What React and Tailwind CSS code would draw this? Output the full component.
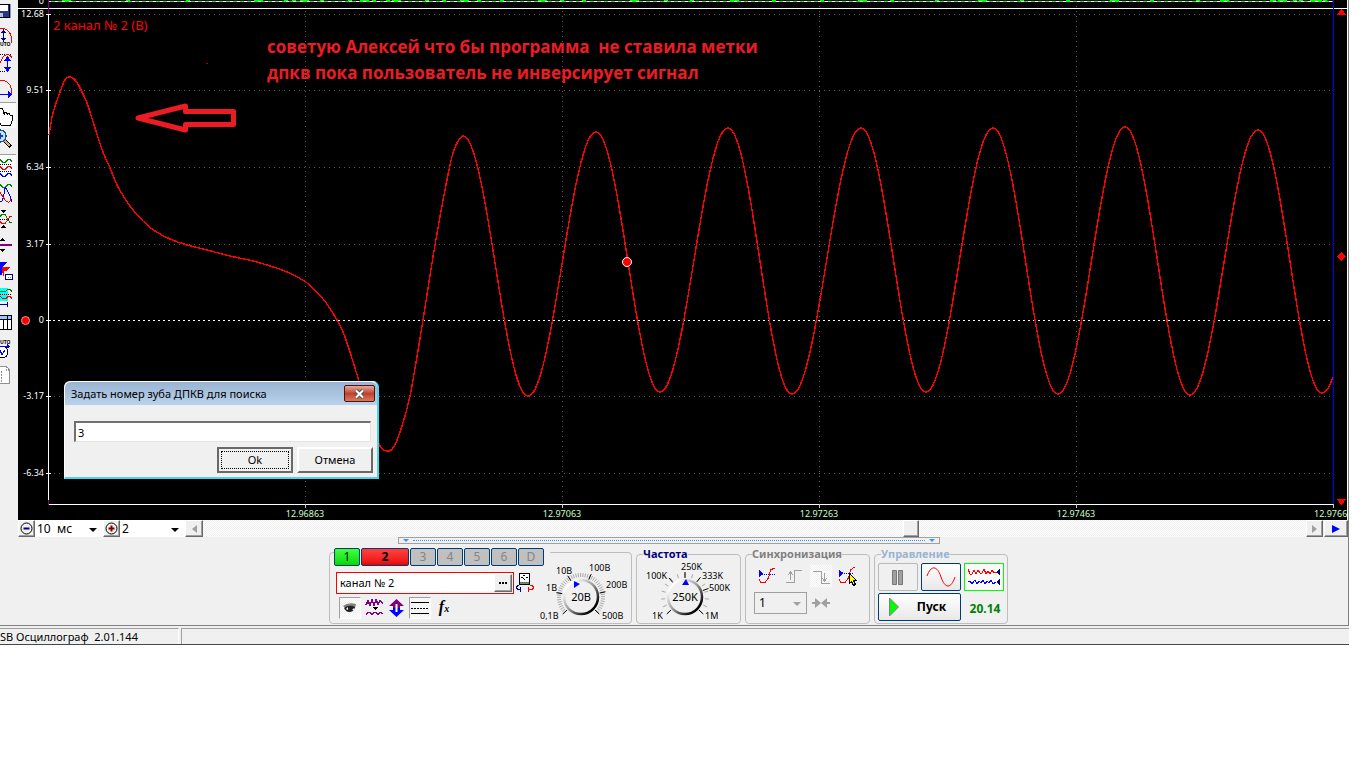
import React, { useState } from "react";

const clamp = (v, lo, hi) => Math.min(hi, Math.max(lo, v));

// first part of the trace: the missing teeth of the crank wheel
const lead = [
  [49, 135], [53, 113], [60, 92], [65, 80], [70, 77], [76, 81], [81, 90], [87, 103],
  [95, 128], [103, 152], [110, 168], [118, 187], [130, 206], [143, 221], [155, 231],
  [170, 239], [187, 245], [207, 250], [230, 256], [253, 261], [270, 266], [287, 272],
  [307, 283], [323, 299], [337, 320], [345, 337], [358, 378], [370, 420], [380, 446],
  [387, 451], [393, 448], [400, 432], [410, 396], [423, 320], [435, 245], [450, 165],
  [457, 143], [463, 136],
];

// then regular teeth, peaks and troughs in turn
const turns = [
  [463, 136], [528, 396], [596, 132], [660, 392], [728, 128], [792, 394], [861, 128],
  [926, 392], [993, 128], [1058, 394], [1125, 127], [1190, 395], [1258, 130],
  [1322, 393], [1391, 130],
];

const buildTrace = () => {
  let d = `M${lead[0][0]} ${lead[0][1]}`;
  for (let i = 0; i < lead.length - 1; i++) {
    const a = lead[clamp(i - 1, 0, lead.length - 1)];
    const b = lead[i];
    const c = lead[i + 1];
    const e = lead[clamp(i + 2, 0, lead.length - 1)];
    d += `C${b[0] + (c[0] - a[0]) / 6} ${b[1] + (c[1] - a[1]) / 6} ${
      c[0] - (e[0] - b[0]) / 6
    } ${c[1] - (e[1] - b[1]) / 6} ${c[0]} ${c[1]}`;
  }
  for (let i = 0; i < turns.length - 1; i++) {
    const [x0, y0] = turns[i];
    const [x1, y1] = turns[i + 1];
    for (let x = x0 + 1; x <= x1 && x <= 1333; x++) {
      const t = (1 - Math.cos((Math.PI * (x - x0)) / (x1 - x0))) / 2;
      d += `L${x} ${(y0 + (y1 - y0) * t).toFixed(1)}`;
    }
  }
  return d;
};

const trace = buildTrace();

const yTicks = [
  ["12.68", 14], ["9.51", 90], ["6.34", 167], ["3.17", 244], ["0", 320], ["-3.17", 396], ["-6.34", 473],
];
const xTicks = [
  ["12.96863", 305], ["12.97063", 562], ["12.97263", 819], ["12.97463", 1076],
];
const noise = [32, 96, 156, 224, 254, 262, 270, 290, 318, 330, 342, 356, 362, 395, 412, 430, 447, 470, 508, 530, 552, 600, 634, 660, 700, 742, 790, 828, 860, 905, 948, 990, 1036, 1080, 1120, 1166, 1190, 1240, 1242, 1248, 1263, 1269, 1280, 1288, 1293];

const Chart = () => (
  <svg viewBox="18 0 1329 520" className="block w-full h-auto bg-black" shapeRendering="crispEdges">
    <g stroke="#5c5c5c" strokeDasharray="1 4">
      {yTicks.map(([t, y]) => t !== "0" && <line key={t} x1="54" x2="1333" y1={y + 0.5} y2={y + 0.5} />)}
      {xTicks.map(([t, x]) => <line key={t} x1={x + 0.5} x2={x + 0.5} y1="6" y2="504" />)}
    </g>
    <path d="M48 320.5H1333" stroke="#fff" strokeDasharray="2 3" />
    <path d="M48 1.5H1333" stroke="#0f0" />
    <path d="M48 1.5H1333" stroke="#fff" strokeDasharray="3 4" />
    {noise.map((x, i) => <rect key={x} x={x + 30} y="0" width={i % 3 ? 4 : 9} height="1" fill="#0f0" />)}
    <path d="M18 8.5H1347M48.5 8V505M48 504.5H1334" stroke="#fff" fill="none" />
    <path d="M48.5 0V14M48.5 500V505" stroke="#800080" />
    <path d="M1333.5 0V504" stroke="#00f" />
    {yTicks.map(([t, y]) => (
      <g key={t}>
        <path d={`M46 ${y + 0.5}H51`} stroke="#fff" />
        <text x="44" y={y + 3} textAnchor="end" fill="#fff" fontSize="9">{t}</text>
      </g>
    ))}
    <text x="44" y="4" textAnchor="end" fill="#fff" fontSize="9">0</text>
    {xTicks.map(([t, x]) => (
      <g key={t}>
        <path d={`M${x + 0.5} 504V508`} stroke="#ccc" />
        <text x={x} y="517" textAnchor="middle" fill="#c8ffc8" fontSize="9">{t}</text>
      </g>
    ))}
    <path d="M1333.5 504V508" stroke="#ccc" />
    <text x="1314" y="517" fill="#c8ffc8" fontSize="9">12.9766</text>
    <path d={trace} stroke="#f00" strokeWidth="1.400" fill="none" />
    <g fill="#f00">
      <path d="M1337 15L1341 9H1342L1346 15ZM1337 499H1346L1342 505H1341ZM1341.500 252L1346 256.500L1341.500 261L1337 256.500Z" />
      <rect x="206" y="63" width="2" height="1" opacity="0.7" />
    </g>
    <g shapeRendering="auto">
      <circle cx="25.500" cy="320.500" r="4" fill="#f00" stroke="#ff9090" />
      <circle cx="627" cy="262" r="4.500" fill="#f00" stroke="#fff" />
      <path
        d="M138 118L185.500 106V111.500H233.500V124.500H185.500V130Z"
        fill="none"
        stroke="#ed1c24"
        strokeWidth="5"
        strokeLinejoin="round"
      />
    </g>
  </svg>
);

const tools = [
  {
    name: "Сохранить",
    box: "h-6",
    art: (
      <>
        <path d="M0 4H10V18H0Z" fill="#000" />
        <path d="M0 5H9V17H0Z" fill="#27348b" />
        <path d="M0 5H8V11H0Z" fill="#fff" />
        <path d="M0 13H3V17H0Z" fill="#b9c0d8" />
        <path d="M10.500 4V18" stroke="#8a95c8" />
      </>
    ),
  },
  {
    name: "Авто амплитуда",
    art: (
      <>
        <path d="M0 4.500H4Q12 7 12 19" stroke="#f00" fill="none" />
        <path d="M3.500 6V17" stroke="#000080" />
        <path d="M1 9L3.500 5L6 9ZM1 14H6L3.500 18Z" fill="#000080" />
        <text x="0" y="22" fontSize="5" fontWeight="bold" fill="#000">UTO</text>
      </>
    ),
  },
  {
    name: "Масштаб по вертикали",
    art: (
      <>
        <path d="M0 4.500H12M0 21.500H6" stroke="#000" strokeDasharray="1 1" />
        <path d="M0 13Q3 5 7 4.500Q11 5 12 8" stroke="#f00" fill="none" />
        <path d="M7.500 8V20" stroke="#00f" />
        <path d="M4 11L7.500 6L11 11ZM4 17H11L7.500 22Z" fill="#00f" />
      </>
    ),
  },
  {
    name: "Масштаб по горизонтали",
    art: (
      <>
        <path d="M0 4.500H4Q12 7 12 18" stroke="#f00" fill="none" />
        <path d="M0 18.500H9" stroke="#00f" />
        <path d="M8 15L12 18.500L8 22Z" fill="#00f" />
      </>
    ),
  },
  {
    name: "Рука",
    box: "h-[26px] border-t border-t-[#a0a0a0]",
    face: "bg-[#fafafa]",
    art: (
      <path
        d="M-1 5.500H2.500L4.500 12V9.500H6.500L7.500 12V10.500H9.500L10.500 13V12.500H12.500V17L10.500 22.500H1.500L-1 19"
        stroke="#000"
        fill="#fff"
      />
    ),
  },
  {
    name: "Лупа",
    art: (
      <>
        <path d="M4 12L11 19" stroke="#000" strokeWidth="4" />
        <path d="M5 13L10 18" stroke="#d8b060" strokeWidth="2" />
        <circle cx="0" cy="8" r="6" fill="#bfe0ff" stroke="#1d4f91" strokeWidth="1.500" />
        <path d="M0 8H3M0 5V11" stroke="#1040a0" strokeWidth="2" />
      </>
    ),
  },
  {
    name: "Раздельные каналы",
    box: "h-[26px] border-t border-t-[#a0a0a0]",
    face: "bg-[#fafafa]",
    art: (
      <>
        <path d="M0 4.500L3 7.500H5L8 4.500H10L12 6.500" stroke="#008000" fill="none" />
        <path d="M0 11.500L3 14.500H5L8 11.500H10L12 13.500" stroke="#f00" fill="none" />
        <path d="M0 18.500L3 21.500H5L8 18.500H10L12 20.500" stroke="#00f" fill="none" />
        <path d="M0 9.500H12M0 16.500H12" stroke="#000" strokeDasharray="1 1" />
      </>
    ),
  },
  {
    name: "Совместные каналы",
    art: (
      <>
        <path d="M0 4.500L3 7.500H5L8 4.500H10L12 6.500" stroke="#008000" fill="none" />
        <path d="M0 22Q3 22 4 14T6 8T9 14T12 22" stroke="#00f" fill="none" />
        <path d="M0 12Q3 18 6 21T11 19" stroke="#f00" fill="none" />
      </>
    ),
  },
  {
    name: "Наложение",
    art: (
      <>
        <path d="M1 4H6L3.500 7ZM1 22H6L3.500 19Z" fill="#000" />
        <path d="M0 10.500L2 8.500H5L10 16.500H12" stroke="#008000" fill="none" />
        <path d="M0 15.500L2 17.500H5L10 10.500H12" stroke="#f00" fill="none" />
        <path d="M0 13.500H10" stroke="#000" strokeDasharray="1 1" />
      </>
    ),
  },
  {
    name: "Сдвиг уровня",
    art: (
      <>
        <path d="M0 9H5L2.500 6ZM0 17H5L2.500 20Z" fill="#000" />
        <path d="M0 13H12" stroke="#800080" strokeWidth="2" />
      </>
    ),
  },
  {
    name: "Метки",
    art: (
      <>
        <path d="M0 4H7L2 10V17H0Z" fill="#00f" />
        <path d="M2 9H10L6 13H4V19L2 14Z" fill="#f00" />
        <path d="M5.500 16.500H12.500V21.500H5.500Z" fill="#fff" stroke="#000080" />
        <path d="M8 19H11" stroke="#888" strokeDasharray="1 1" />
      </>
    ),
  },
  {
    name: "Измерение",
    art: (
      <>
        <path d="M0 4H8V17H0Z" fill="#0ff" />
        <path d="M0 7.500H5L8 5.500H10L12 7.500" stroke="#008000" fill="none" />
        <path d="M0 12.500L3 14.500H6L8 12.500H10L12 14.500" stroke="#f00" fill="none" />
        <path d="M0 10.500H12" stroke="#000" strokeDasharray="1 1" />
        <path d="M0 20.500H7M7.500 18V23" stroke="#000080" />
      </>
    ),
  },
  {
    name: "Таблица",
    art: (
      <>
        <path d="M0 5.500H11.500V19.500H0" fill="#fff" stroke="#000" />
        <path d="M0 6H11V9H0Z" fill="#9cc8ff" />
        <path d="M0 9.500H11M3.500 9V19M7.500 6V19" stroke="#000" />
      </>
    ),
  },
  {
    name: "Авто измерение",
    art: (
      <>
        <text x="0" y="8" fontSize="5" fontWeight="bold" fill="#000">UTO</text>
        <circle cx="2" cy="16" r="6" fill="#fff" stroke="#000" />
        <path d="M0 14L2 19L5 14M0 10.500H8" stroke="#00f" fill="none" />
        <path d="M7 8L11 11L7 12Z" fill="#00f" />
      </>
    ),
  },
  {
    name: "Отчет",
    art: (
      <>
        <path d="M0 4.500H6.500L9.500 8V21.500H0" fill="#fff" stroke="#909090" />
        <path d="M6.500 4V8.500H9.500M1 9V20" stroke="#909090" fill="none" strokeDasharray="2 1" />
      </>
    ),
  },
];

const Toolbar = () => (
  <div className="w-[18px] shrink-0 pr-0.5">
    {tools.map((t) => (
      <button key={t.name} aria-label={t.name} className={`block w-full overflow-hidden ${t.box || "h-[26px]"} ${t.face || ""}`}>
        <svg viewBox="0 0 16 26" width="16" height="26" shapeRendering="crispEdges">{t.art}</svg>
      </button>
    ))}
  </div>
);

const Dialog = () => {
  const [tooth, setTooth] = useState("3");
  return (
    <div
      role="dialog"
      aria-labelledby="dlg-title"
      className="absolute left-[46px] top-[381px] w-[315px] rounded-t-md bg-[#f0f0f0] border-t border-l border-white border-r-2 border-b-2 border-r-[#4fd0ee] border-b-[#4fd0ee] pb-1"
    >
      <div className="flex h-[23px] items-center justify-between rounded-t-md bg-linear-to-b from-[#99b4d1] to-[#bad2ec] pl-1.5 pr-0.5">
        <span id="dlg-title" className="text-black">Задать номер зуба ДПКВ для поиска</span>
        <button
          aria-label="Закрыть"
          className="flex h-[17px] w-[31px] items-center justify-center rounded-xs border border-[#4c1410] bg-linear-to-b from-[#e6a79c] via-[#c0402c] to-[#d67a5c]"
        >
          <svg width="13" height="10" viewBox="0 0 13 10">
            <path d="M3 1.500L10 8.500M10 1.500L3 8.500" stroke="#555" strokeWidth="4" />
            <path d="M3 1.500L10 8.500M10 1.500L3 8.500" stroke="#fff" strokeWidth="2" />
          </svg>
        </button>
      </div>
      <div className="pt-4 pr-1 pl-[9px]">
        <div className="pr-0.5">
          <input
            aria-label="Номер зуба"
            value={tooth}
            onChange={(e) => setTooth(e.target.value)}
            className="block h-[21px] w-full border-t-2 border-l-2 border-r border-b border-t-[#707070] border-l-[#707070] border-r-[#e3e3e3] border-b-[#e3e3e3] bg-white px-0.5 outline-none"
          />
        </div>
        <div className="mt-[5px] flex justify-end gap-1">
          <button className="h-[26px] w-[76px] border-2 border-[#696969] bg-[#f0f0f0] p-0.5">
            <span className="flex h-full items-center justify-center border border-dotted border-black">Ok</span>
          </button>
          <button className="h-[26px] w-[76px] border-2 border-t-white border-l-white border-r-[#696969] border-b-[#696969] bg-[#f0f0f0]">
            Отмена
          </button>
        </div>
      </div>
    </div>
  );
};

const Arrow = ({ className }) => (
  <svg className={className} width="8" height="4" viewBox="0 0 8 4" fill="currentColor">
    <path d="M0 0H8L4 4Z" />
  </svg>
);

const Pick = ({ label, options, width, disabled, frame = "" }) => (
  <div className={`relative ${width}`}>
    <select
      aria-label={label}
      disabled={disabled}
      className={`block h-full w-full appearance-none text-black outline-none ${frame}`}
    >
      {options.map((o) => (
        <option key={o}>{o}</option>
      ))}
    </select>
    <Arrow className={`pointer-events-none absolute right-1.5 top-1/2 -mt-px ${disabled ? "text-[#a0a0a0]" : "text-black"}`} />
  </div>
);

const raised = "border border-t-white border-l-white border-r-[#696969] border-b-[#696969] bg-[#f0f0f0] shadow-[inset_-1px_-1px_0_#a0a0a0]";
const check = "bg-[repeating-conic-gradient(#f0f0f0_0_25%,#ffffff_0_50%)] bg-size-[2px_2px]";

const ScrollRow = () => (
  <div className="ml-[18px] flex h-[17px]">
    {["−", "+"].map((sign, i) => (
      <React.Fragment key={sign}>
        <button aria-label={i ? "Увеличить" : "Уменьшить"} className={`flex w-[17px] items-center justify-center ${raised}`}>
          <svg width="13" height="13" viewBox="0 0 13 13">
            <circle cx="6.500" cy="6.500" r="5.500" fill="none" stroke="#000" />
            <path d="M3.500 6.500H9.500" stroke={i ? "#800000" : "#000080"} strokeWidth="2" />
            {i === 1 && <path d="M6.500 3.500V9.500" stroke="#800000" strokeWidth="2" />}
          </svg>
        </button>
        {i === 0 ? (
          <Pick label="Развертка" options={["10\u00a0 мс"]} width="w-[68px]" frame="bg-white text-xs pl-0.5" />
        ) : (
          <Pick label="Усиление" options={["2"]} width="w-[65px]" frame="bg-white text-xs pl-0.5" />
        )}
      </React.Fragment>
    ))}
    <button aria-label="Влево" className={`flex w-[18px] items-center justify-center ${raised}`}>
      <svg width="5" height="8" viewBox="0 0 5 8"><path d="M5 0V8L0 4Z" fill="#a0a0a0" /></svg>
    </button>
    <div className={`flex flex-1 ${check}`}>
      <div className="w-[63.500%]" />
      <div className={`w-4 ${raised}`} />
    </div>
    <button aria-label="Вправо" className={`flex w-[17px] items-center justify-center ${raised}`}>
      <svg width="5" height="8" viewBox="0 0 5 8"><path d="M0 0V8L5 4Z" fill="#a0a0a0" /></svg>
    </button>
    <button aria-label="Воспроизвести" className={`ml-px flex w-6 items-center justify-center ${raised}`}>
      <svg width="8" height="8" viewBox="0 0 8 8"><path d="M0 0V8L8 4Z" fill="#00f" /></svg>
    </button>
  </div>
);

const Knob = ({ id, value, majors, step, labels, pointer, width }) => {
  const ray = (deg, r0, r1) => {
    const a = (deg * Math.PI) / 180;
    return `M${45 + r0 * Math.sin(a)} ${38 - r0 * Math.cos(a)}L${45 + r1 * Math.sin(a)} ${38 - r1 * Math.cos(a)}`;
  };
  const minors = [];
  for (let a = -133; a <= 133; a += step) minors.push(a);
  return (
    <svg width={width} height="64" viewBox={`0 0 ${width} 64`} role="img" aria-label={value}>
      <defs>
        <linearGradient id={id} x1="0" y1="0" x2="1" y2="1">
          <stop offset="0.15" stopColor="#fff" />
          <stop offset="0.5" stopColor="#999" />
          <stop offset="0.85" stopColor="#000" />
        </linearGradient>
      </defs>
      {minors.map((a) => <path key={a} d={ray(a, 20, 24)} stroke="#a8a8a8" />)}
      {majors.map((a) => <path key={a} d={ray(a, 19, 25)} stroke="#000" />)}
      <circle cx="45" cy="38" r="17" fill="#f0f0f0" stroke={`url(#${id})`} strokeWidth="2.500" />
      <path d={pointer} fill="#00f" />
      <text x="45" y="42" textAnchor="middle" fontSize="11">{value}</text>
      {labels.map(([t, x, y]) => <text key={t} x={x} y={y} fontSize="9">{t}</text>)}
    </svg>
  );
};

const channels = [
  ["1", "w-[26px] bg-linear-to-b from-[#3dff3d] to-[#00d800] text-black"],
  ["2", "w-12 bg-linear-to-b from-[#ff4040] to-[#e80000] font-bold text-black"],
  ["3", "w-[26px] bg-[#c0c0c0] text-[#858585]"],
  ["4", "w-[26px] bg-[#c0c0c0] text-[#858585]"],
  ["5", "w-[26px] bg-[#c0c0c0] text-[#858585]"],
  ["6", "w-[26px] bg-[#c0c0c0] text-[#858585]"],
  ["D", "w-[26px] bg-[#c0c0c0] text-[#858585]"],
];

const pressed = `border border-t-[#a0a0a0] border-l-[#a0a0a0] border-r-white border-b-white ${check}`;

const ChannelGroup = () => {
  const [name, setName] = useState("канал № 2");
  return (
    <div className="mt-[5px] flex w-[303px] rounded-sm border border-[#bdbdbd]">
      <div className="-mt-[5px] pl-1">
        <div className="flex gap-px bg-[#f0f0f0] pr-1.5">
          {channels.map(([n, look]) => (
            <button key={n} className={`h-[18px] rounded-xs border border-[#003c74] text-xs leading-4 ${look}`}>
              {n}
            </button>
          ))}
        </div>
        <div className="mt-1.5 ml-0.5 flex items-center">
          <div className="flex h-[22px] w-[178px] border border-[#f00] bg-white p-px">
            <input
              aria-label="Имя канала"
              value={name}
              onChange={(e) => setName(e.target.value)}
              className="min-w-0 flex-1 pl-0.5 outline-none"
            />
            <button aria-label="Настройки" className={`flex w-[18px] items-center justify-center ${raised}`}>
              <svg width="9" height="2"><path d="M0 1H2M3 1H5M6 1H8" stroke="#000" strokeWidth="2" /></svg>
            </button>
          </div>
          <button aria-label="Датчик" className="ml-0.5">
            <svg width="18" height="20" viewBox="0 0 18 20" shapeRendering="crispEdges">
              <path d="M3.500 0.500H13.500V11.500H3.500Z" fill="#fff" stroke="#000" />
              <path d="M4 9H13V11H4Z" fill="#808080" />
              <path d="M4 9.500H13" stroke="#0a0" strokeDasharray="1 1" />
              <path d="M5 4.500H6M7 2.500H9M10 4.500H12M8.500 7L6.500 4" stroke="#000" fill="none" />
              <path d="M3 12.500H1.500L0.500 14.500L1.500 16.500H5M4.500 14V19" stroke="#000080" fill="none" />
              <path d="M14 12.500H16.500L17.500 14.500L16.500 16.500H12M12.500 14V19" stroke="#f00" fill="none" />
            </svg>
          </button>
        </div>
        <div className="mt-[3px] ml-[5px] flex items-center gap-1">
          <button aria-label="Показать" className={`flex size-[22px] items-center justify-center ${pressed}`}>
            <svg width="14" height="10" viewBox="0 0 14 10">
              <path d="M0 3Q5 -1 13 1L12 5L2 5Z" fill="#808080" />
              <path d="M1 5Q6 1 12 4Q11 9 6 9Q3 9 1 5Z" fill="#222" />
              <path d="M3 6L5 4V7ZM9 7L11 5V7Z" fill="#fff" />
            </svg>
          </button>
          <button aria-label="Фильтр">
            <svg width="20" height="18" viewBox="0 0 20 18" shapeRendering="crispEdges">
              <path d="M1 6L3 2L5 6L7 1L9 6L11 1L13 5L15 2L18 4" stroke="#800080" strokeWidth="1.500" fill="none" />
              <path d="M1 16L3 13H5L7 16L9 13H11L13 16L15 13L18 15" stroke="#800080" fill="none" />
              <path d="M7 8H13L10 11Z" fill="#000" />
            </svg>
          </button>
          <button aria-label="Инверсия">
            <svg width="16" height="18" viewBox="0 0 16 18">
              <path d="M7.500 0L15 7H11V9H4V7H0Z" fill="#800080" />
              <path d="M7.500 18L15 11H11V9H4V11H0Z" fill="#00f" />
              <path d="M7.500 5V13" stroke="#fff" strokeWidth="2" />
            </svg>
          </button>
          <button aria-label="Линии" className={`flex size-[22px] items-center justify-center ${pressed}`}>
            <svg width="18" height="14" viewBox="0 0 18 14" shapeRendering="crispEdges">
              <path d="M0 1.500H18M0 12.500H18" stroke="#000" />
              <path d="M0 7.500H18" stroke="#000" strokeDasharray="2 1" />
            </svg>
          </button>
          <button className="w-[18px] font-['Liberation_Serif',serif] text-base leading-4 font-bold italic">
            f<span className="text-[10px]">x</span>
          </button>
        </div>
      </div>
      <div className="-ml-3.5 pt-1.5">
        <Knob
          id="k1"
          value="20В"
          width="94"
          step={6}
          majors={[-133, -80, -32, 24, 78, 133]}
          pointer="M38 22V29L44 25Z"
          labels={[["10В", 20, 15], ["100В", 53, 12], ["1В", 10, 32], ["200В", 70, 29], ["0,1В", 4, 60], ["500В", 66, 60]]}
        />
      </div>
    </div>
  );
};

const Group = ({ title, tone, width, children }) => (
  <fieldset className={`h-[77px] rounded-sm border border-[#bdbdbd] ${width}`}>
    <legend className={`ml-1.5 text-[11px] leading-[14px] font-bold ${tone}`}>{title}</legend>
    {children}
  </fieldset>
);

const SyncGroup = () => (
  <Group title="Синхронизация" tone="text-[#808080]" width="w-[125px]">
    <div className="flex gap-[5px] pt-1 pl-2.5">
      <button aria-label="Синхронизация по уровню" className="size-[22px]">
        <svg width="22" height="22" viewBox="0 0 22 22" shapeRendering="crispEdges">
          <path d="M3 5V12L8 9Z" fill="#00f" />
          <path d="M8 9.500H19" stroke="#00f" strokeDasharray="1 1" />
          <path d="M3.500 14L4.500 17.500H9L12.500 13L14.500 5L18.500 3" stroke="#f00" fill="none" />
        </svg>
      </button>
      <button aria-label="По фронту" className="size-[22px]" disabled>
        <svg width="22" height="22" viewBox="0 0 22 22" fill="none" stroke="#a0a0a0" shapeRendering="crispEdges">
          <path d="M3 17.500H11.500V5.500H19M7.500 15V7M5 10L7.500 7L10 10" />
        </svg>
      </button>
      <button aria-label="По спаду" className={`size-[22px] ${check}`} disabled>
        <svg width="22" height="22" viewBox="0 0 22 22" fill="none" stroke="#a0a0a0" shapeRendering="crispEdges">
          <path d="M3 6.500H11.500V18.500H20M14.500 8V16M12 13L14.500 16L17 13" />
        </svg>
      </button>
      <button aria-label="Выбор уровня" className="size-[22px]">
        <svg width="22" height="22" viewBox="0 0 22 22" shapeRendering="crispEdges">
          <path d="M2 5V12L7 8Z" fill="#00f" />
          <path d="M7 8.500H17" stroke="#00f" strokeDasharray="1 1" />
          <path d="M2.500 14L3.500 17.500H8L11.500 13L13.500 5L17.500 2" stroke="#f00" fill="none" />
          <path d="M12.500 8.500L19.500 15.500H16.500L18.500 19.500L16.500 20.500L14.500 16.500L12.500 18.500Z" fill="#ff0" stroke="#000" />
        </svg>
      </button>
    </div>
    <div className="mt-[5px] flex items-center gap-[5px] pl-2">
      <Pick label="Канал синхронизации" options={["1"]} width="w-[53px] h-[22px]" disabled frame="border border-[#a0a0a0] pl-1 text-xs" />
      <svg width="18" height="10" viewBox="0 0 18 10" fill="#a0a0a0">
        <path d="M0 4H3V0L9 5L3 10V6H0ZM18 4H15V0L9 5L15 10V6H18Z" />
      </svg>
    </div>
  </Group>
);

const ControlGroup = () => (
  <Group title="Управление" tone="text-[#99b4d1]" width="w-[134px]">
    <div className="flex gap-[3px] px-[3px] pt-0.5">
      <button aria-label="Пауза" className="flex h-7 w-10 items-center justify-center rounded-xs border border-[#b8b8b8]">
        <svg width="12" height="15" viewBox="0 0 12 15" fill="#a0a0a0" stroke="#777">
          <path d="M0.500 0.500H4.500V14.500H0.500ZM6.500 0.500H10.500V14.500H6.500Z" />
        </svg>
      </button>
      <button aria-label="Сигнал" className="flex h-7 w-10 items-center justify-center rounded-xs border border-[#003c74] bg-linear-to-b from-white to-[#e8e8e8]">
        <svg width="30" height="20" viewBox="0 0 30 20">
          <path d="M1 9C5 -2 11 -2 15 10S25 22 29 10" stroke="#f00" fill="none" />
        </svg>
      </button>
      <button aria-label="Два сигнала" className="flex h-7 w-10 items-center justify-center border border-[#0f0] bg-[#fafafa]">
        <svg width="32" height="18" viewBox="0 0 32 18" shapeRendering="crispEdges">
          <path d="M0 1L2 6H4L6 2L8 6L10 2L12 5H14L16 1L18 6L20 3L22 6L24 2L26 5L29 4" stroke="#f00" fill="none" />
          <path d="M0 14L2 13L4 16L7 12L9 16L11 13L13 15L15 12L17 16L19 13L21 15L23 12L25 16L28 14" stroke="#00f" fill="none" />
          <path d="M32 1V7L28 4ZM32 11V17L28 14Z" fill="#000080" />
        </svg>
      </button>
    </div>
    <div className="mt-0.5 flex items-center gap-[3px] pr-px pl-[3px]">
      <button className="flex h-7 w-[83px] items-center rounded-xs border border-[#003c74] bg-linear-to-b from-white to-[#e8e8e8] pl-2.5 text-xs font-bold">
        <svg width="10" height="20" viewBox="0 0 10 20"><path d="M0.500 1V19L9.500 10Z" fill="#0f0" stroke="#808080" /></svg>
        <span className="flex-1 pl-1 text-center">Пуск</span>
      </button>
      <span className="flex-1 pt-1 text-center text-xs font-bold text-[#008000]">20.14</span>
    </div>
  </Group>
);

export default function App() {
  return (
    <div className="min-h-screen bg-white font-['Noto_Sans',sans-serif] text-[11px] leading-4 text-black">
      <div className="mr-[11px] bg-[#f0f0f0]">
        <div className="border-r border-[#808080]">
          <div className="flex border-r border-white">
            <Toolbar />
            <div className="relative flex-1 bg-black">
              <Chart />
              <p className="absolute top-[17px] left-[35px] text-[13px] text-[#f00]">2 канал № 2 (В)</p>
              <p className="absolute top-[34px] left-[249px] text-[17px] leading-[26px] font-bold whitespace-pre text-[#ed1c24] font-['Open_Sans',sans-serif]">
                {"советую Алексей что бы программа  не ставила метки\nдпкв пока пользователь не инверсирует сигнал"}
              </p>
              <Dialog />
            </div>
          </div>
          <ScrollRow />
          <div className="flex h-[88px] flex-col items-center gap-[3px] pr-[11px]">
            <div className="flex h-[7px] w-[542px] items-center gap-1 border border-[#a0a0a0] px-1">
              <Arrow className="h-[3px] w-[6px] text-[#3399ff]" />
              <div className="flex-1 border-t border-dotted border-[#3399ff]" />
              <Arrow className="h-[3px] w-[6px] text-[#3399ff]" />
            </div>
            <div className="flex h-[77px] gap-1">
              <ChannelGroup />
              <Group title="Частота" tone="text-[#000080]" width="w-[105px]">
                <div className="-mt-0.5 pl-[3px]">
                  <Knob
                    id="k2"
                    value="250K"
                    width="98"
                    step={19}
                    majors={[-133, -40, 0, 38, 70, 133]}
                    pointer="M42 26H49L46 20Z"
                    labels={[["250K", 41, 11], ["100K", 6, 20], ["333K", 62, 20], ["500K", 69, 32], ["1K", 12, 60], ["1M", 65, 60]]}
                  />
                </div>
              </Group>
              <SyncGroup />
              <ControlGroup />
            </div>
          </div>
        </div>
        <div className="flex gap-0.5 border-t border-b border-t-[#808080] border-b-[#404850] pt-0.5">
          <div className="w-[179px] border-t border-r border-[#a0a0a0] border-r-white whitespace-pre leading-[15px]">
            SB Осциллограф  2.01.144
          </div>
          <div className="flex-1 border-t border-l border-[#a0a0a0]" />
        </div>
      </div>
    </div>
  );
}
